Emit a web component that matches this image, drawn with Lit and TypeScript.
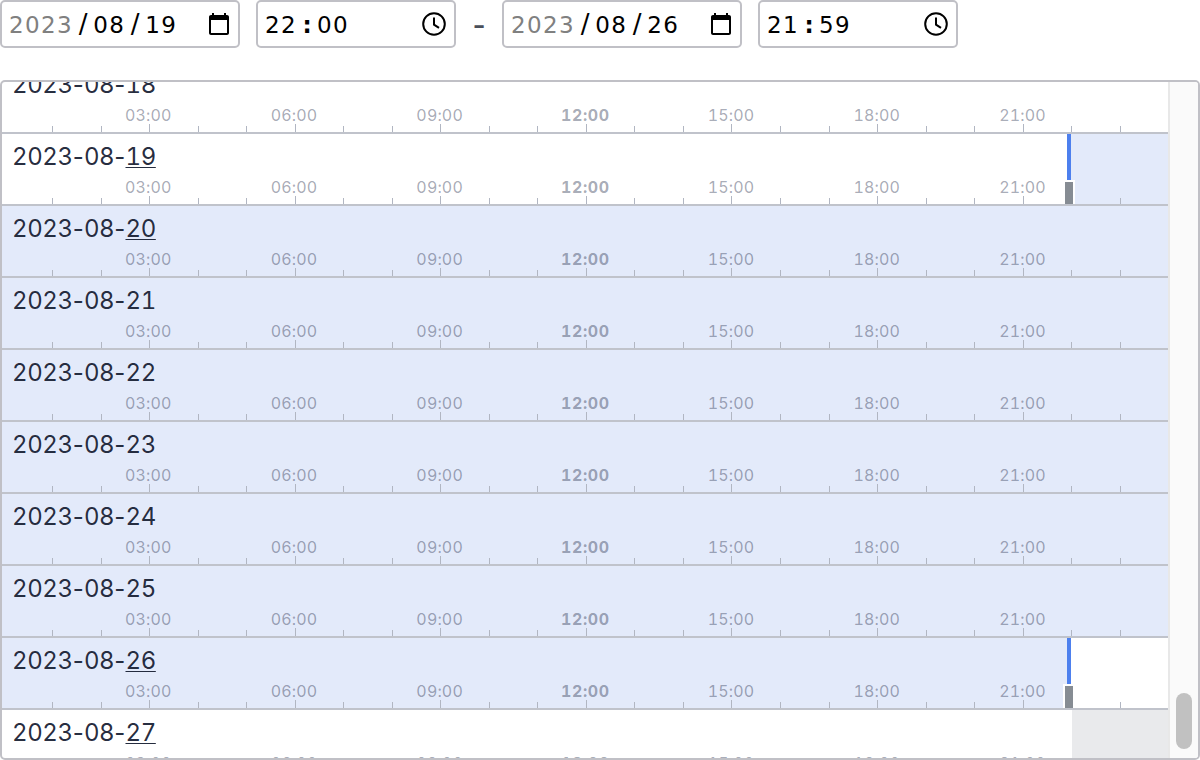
import { LitElement, html, css, nothing } from 'lit';
import { customElement } from 'lit/decorators.js';

const HOUR_W = 48.53;
const GRID_X = 1.5;
const ROW_W = 1166;

interface Day {
  date: string;
  mark?: boolean; // last two digits underlined
  sel?: [number, number];
  off?: [number, number];
  handle?: number;
}

const DAYS: Day[] = [
  { date: '2023-08-18' },
  { date: '2023-08-19', mark: true, sel: [22, 24], handle: 22 },
  { date: '2023-08-20', mark: true, sel: [0, 24] },
  { date: '2023-08-21', sel: [0, 24] },
  { date: '2023-08-22', sel: [0, 24] },
  { date: '2023-08-23', sel: [0, 24] },
  { date: '2023-08-24', sel: [0, 24] },
  { date: '2023-08-25', sel: [0, 24] },
  { date: '2023-08-26', mark: true, sel: [0, 22], handle: 22 },
  { date: '2023-08-27', mark: true, off: [22.02, 24] },
];

const hourX = (h: number) => (h <= 0 ? 0 : h >= 24 ? ROW_W : GRID_X + h * HOUR_W);

const fieldStyles = css`
  :host {
    display: block;
  }
  .box {
    display: flex;
    align-items: center;
    justify-content: space-between;
    box-sizing: border-box;
    height: 48px;
    padding: 0 8px 0 7px;
    border: 2px solid #c0c0c6;
    border-radius: 5px;
    font: 23px 'DejaVu Sans', sans-serif;
    color: #000;
  }
  .text {
    padding-top: 1px;
    letter-spacing: 1.4px;
    white-space: pre;
  }
  .sep {
    display: inline-block;
    width: 20px;
    text-align: center;
    letter-spacing: 0;
    font-size: 26px;
    line-height: 20px;
  }
  svg {
    display: block;
    width: 24px;
    height: 24px;
  }
`;

@customElement('date-field')
export class DateField extends LitElement {
  static properties = { value: { type: String } };
  value = '';

  static styles = [
    fieldStyles,
    css`
      .box {
        width: 240px;
        padding-right: 7px;
      }
      .year {
        color: #808080;
      }
    `,
  ];

  render() {
    const [y, m, d] = this.value.split('/');
    return html`
      <div class="box">
        <span class="text"
          ><span class="year">${y}</span><span class="sep">/</span>${m}<span
            class="sep"
            >/</span
          >${d}</span
        >
        <svg viewBox="0 0 24 24" fill="#000">
          <path
            d="M20 3h-1V1h-2v2H7V1H5v2H4c-1.1 0-2 .9-2 2v16c0 1.1.9 2 2 2h16c1.1 0 2-.9 2-2V5c0-1.1-.9-2-2-2zm0 18H4V8h16v13z"
          />
        </svg>
      </div>
    `;
  }
}

@customElement('time-field')
export class TimeField extends LitElement {
  static properties = { value: { type: String } };
  value = '';

  static styles = [
    fieldStyles,
    css`
      .box {
        width: 200px;
      }
      .sep {
        font-size: 23px;
        font-weight: 700;
      }
    `,
  ];

  render() {
    const [h, m] = this.value.split(':');
    return html`
      <div class="box">
        <span class="text">${h}<span class="sep">:</span>${m}</span>
        <svg viewBox="0 0 24 24" fill="none" stroke="#000" stroke-width="2">
          <circle cx="12" cy="12" r="10.8" />
          <path d="M12 5.5V12.6l5 3.2" />
        </svg>
      </div>
    `;
  }
}

@customElement('app-root')
export class AppRoot extends LitElement {
  static styles = css`
    :host {
      display: block;
      height: 760px;
      overflow: hidden;
      background: #fff;
    }
    .toolbar {
      display: flex;
      align-items: center;
      gap: 16px;
      height: 48px;
      margin-bottom: 32px;
    }
    .dash {
      display: flex;
      justify-content: center;
      width: 14px;
      font: 36px/42px 'DejaVu Sans Mono', monospace;
      color: #4a4f5a;
    }
    .panel {
      display: flex;
      box-sizing: border-box;
      height: 680px;
      border: 2px solid #c0c0c6;
      border-radius: 5px;
      overflow: hidden;
    }
    .list {
      width: 1166px;
      flex: none;
      overflow: hidden;
    }
    .rows {
      margin-top: -20px;
    }
    .row {
      position: relative;
      box-sizing: border-box;
      height: 72px;
      border-bottom: 2px solid #c0c3cb;
      font-family: Inter, sans-serif;
      font-variant-numeric: tabular-nums;
    }
    .band {
      position: absolute;
      top: 0;
      bottom: 0;
    }
    .band.sel {
      background: #e3eafa;
    }
    .band.off {
      background: #e9eaec;
    }
    .date {
      position: relative;
      height: 45px;
      padding-left: 10px;
      font-size: 24px;
      line-height: 46px;
      letter-spacing: -0.4px;
      color: rgba(25, 33, 52, 0.95);
    }
    .date .hy {
      font-variant-numeric: normal;
      letter-spacing: 0.2px;
    }
    .date u {
      text-decoration-thickness: 1.3px;
      text-underline-offset: 2px;
    }
    .scale {
      position: relative;
      width: 1164.72px;
      height: 25px;
      margin-left: 1.5px;
    }
    .labels {
      display: grid;
      grid-template-columns: repeat(24, 1fr);
      height: 17px;
      margin-left: -1px;
      font-size: 16px;
      line-height: 16px;
      letter-spacing: 0.15px;
      color: rgba(30, 40, 70, 0.4);
    }
    .labels span {
      grid-row: 1;
      text-align: center;
    }
    .labels .noon {
      font-weight: 700;
      letter-spacing: 0.6px;
    }
    .ticks {
      display: grid;
      grid-template-columns: repeat(24, 1fr);
      align-items: end;
      height: 8px;
    }
    .tick {
      height: 6px;
      border-left: 1px solid #b1b6c2;
    }
    .tick.major {
      height: 8px;
    }
    .tick.none {
      border-left: 0;
    }
    .bar {
      position: absolute;
      top: 0;
      width: 4px;
      height: 46px;
      background: #4d80ee;
    }
    .grip {
      position: absolute;
      bottom: 0;
      width: 8px;
      height: 22px;
      background: #868c93;
      border: 2px solid #fff;
      border-bottom: 0;
    }
    .scrollbar {
      flex: 1;
      display: flex;
      align-items: flex-end;
      justify-content: center;
      box-sizing: border-box;
      padding: 0 0 9px;
      background: #fafafa;
      border-left: 2px solid #e8e8e8;
    }
    .thumb {
      width: 16px;
      height: 56px;
      border-radius: 8px;
      background: #c1c1c1;
    }
  `;

  renderScale() {
    const hours = Array.from({ length: 24 }, (_, h) => h);
    return html`
      <div class="scale">
        <div class="labels">
          ${[3, 6, 9, 12, 15, 18, 21].map(
            (h) => html`<span
              class=${h === 12 ? 'noon' : ''}
              style="grid-column: ${h - 1} / ${h + 3}"
              >${String(h).padStart(2, '0')}:00</span
            >`
          )}
        </div>
        <div class="ticks">
          ${hours.map(
            (h) =>
              html`<div
                class="tick ${h === 0 ? 'none' : h % 3 === 0 ? 'major' : ''}"
              ></div>`
          )}
        </div>
      </div>
    `;
  }

  renderBand(kind: string, span?: [number, number]) {
    if (!span) return nothing;
    const left = hourX(span[0]);
    return html`<div
      class="band ${kind}"
      style="left:${left}px;width:${hourX(span[1]) - left}px"
    ></div>`;
  }

  renderDate(day: Day) {
    const [y, m, d] = day.date.split('-');
    return html`${y}<span class="hy">-</span>${m}<span class="hy">-</span
      >${day.mark ? html`<u>${d}</u>` : d}`;
  }

  render() {
    return html`
      <div class="toolbar">
        <date-field value="2023/08/19"></date-field>
        <time-field value="22:00"></time-field>
        <span class="dash">-</span>
        <date-field value="2023/08/26"></date-field>
        <time-field value="21:59"></time-field>
      </div>
      <div class="panel">
        <div class="list">
          <div class="rows">
            ${DAYS.map(
              (day) => html`
                <div class="row">
                  ${this.renderBand('sel', day.sel)}
                  ${this.renderBand('off', day.off)}
                  <div class="date">${this.renderDate(day)}</div>
                  ${this.renderScale()}
                  ${day.handle
                    ? html`
                        <div
                          class="bar"
                          style="left:${hourX(day.handle) - 4}px"
                        ></div>
                        <div
                          class="grip"
                          style="left:${hourX(day.handle) - 8}px"
                        ></div>
                      `
                    : nothing}
                </div>
              `
            )}
          </div>
        </div>
        <div class="scrollbar"><div class="thumb"></div></div>
      </div>
    `;
  }
}
